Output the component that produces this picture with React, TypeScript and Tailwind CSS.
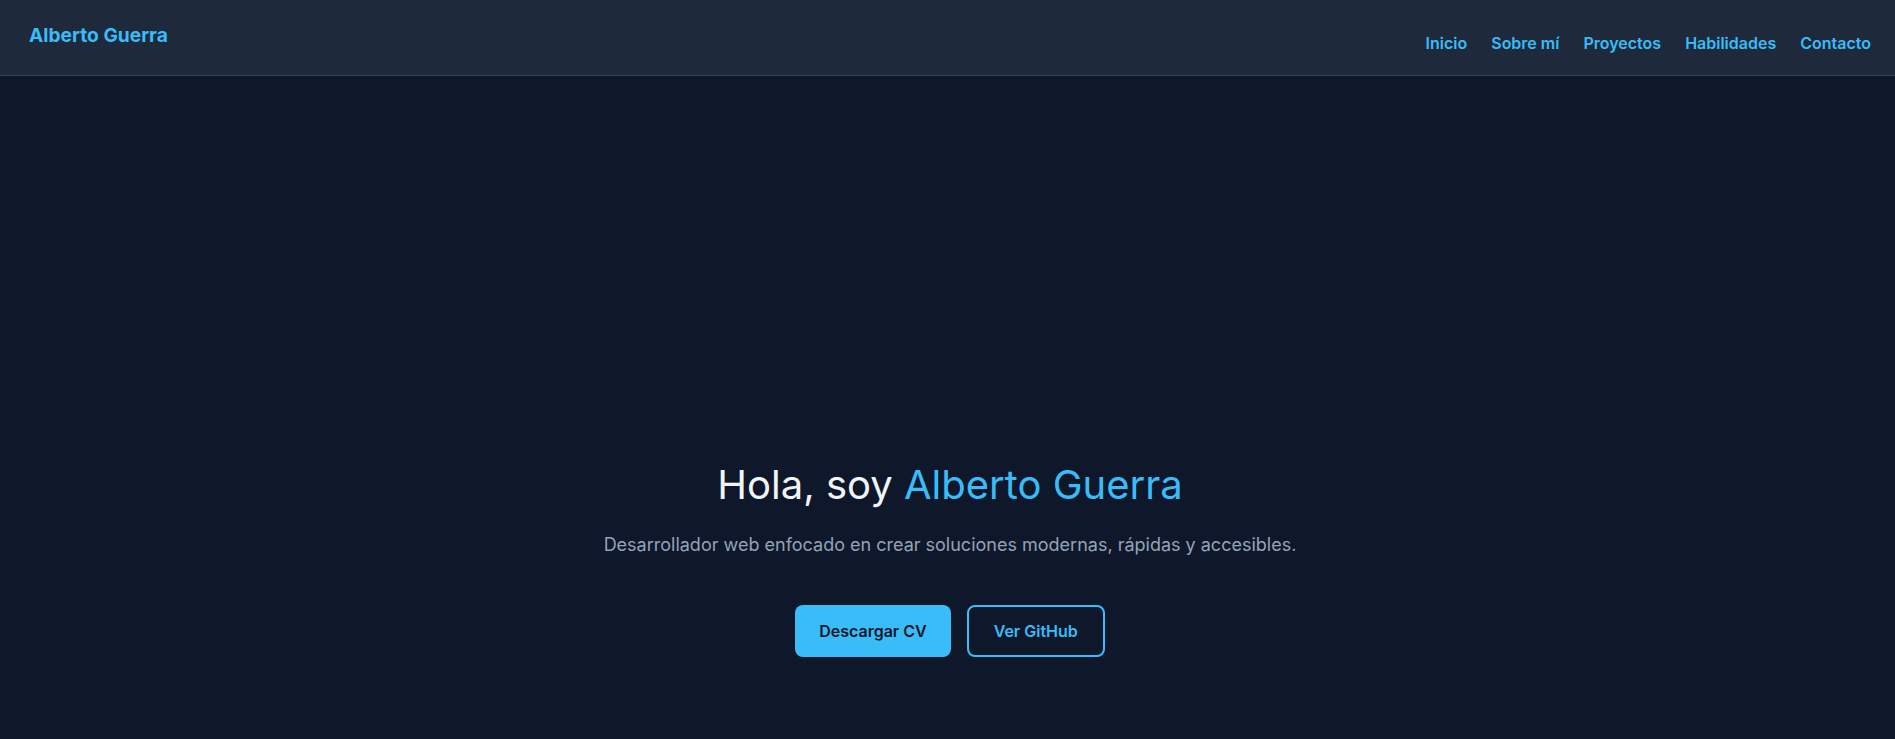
import React from "react";

export default function App() {
  const links = ["Inicio", "Sobre mí", "Proyectos", "Habilidades", "Contacto"];
  return (
    <div
      className="min-h-screen bg-[#0f172a] text-white"
      style={{ fontFamily: "Inter, 'Noto Sans', sans-serif" }}
    >
      <header className="h-[76px] pl-[29px] pr-6 flex justify-between items-start bg-[#1e293b] border-b border-[#334155]">
        <div className="mt-[21px] text-[19.2px] leading-7 font-bold text-[#38bdf8]">Alberto Guerra</div>
        <nav className="mt-[31px] flex gap-6">
          {links.map((l) => (
            <a key={l} href="#" className="text-base leading-6 font-semibold text-[#38bdf8]">
              {l}
            </a>
          ))}
        </nav>
      </header>
      <main className="flex flex-col items-center pt-[385px] pl-[5px] text-center">
        <h1 className="text-[40px] leading-[48px] font-normal text-[#f1f5f9]">
          Hola, soy <span className="text-[#38bdf8]">Alberto Guerra</span>
        </h1>
        <p className="mt-[22px] text-lg leading-7 text-[#94a3b8]">
          Desarrollador web enfocado en crear soluciones modernas, rápidas y accesibles.
        </p>
        <div className="mt-[46px] flex gap-4">
          <a href="#" className="px-6 py-3.5 leading-6 rounded-lg bg-[#38bdf8] text-[#0f172a] font-semibold text-base">
            Descargar CV
          </a>
          <a href="#" className="px-[25px] py-3 leading-6 rounded-lg border-2 border-[#38bdf8] text-[#38bdf8] font-semibold text-base">
            Ver GitHub
          </a>
        </div>
      </main>
    </div>
  );
}
